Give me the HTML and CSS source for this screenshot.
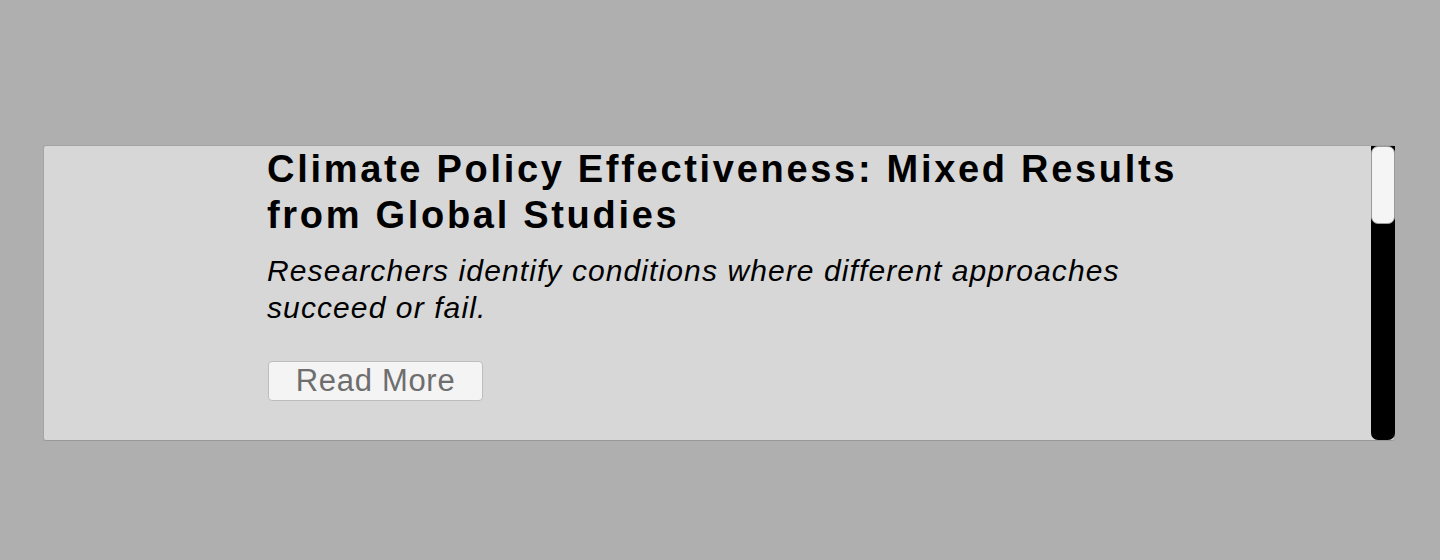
FILE: index.html
```html
<!DOCTYPE html>
<html lang="en">
<head>
<meta charset="utf-8">
<title>Climate Policy Effectiveness</title>
<link rel="stylesheet" href="styles.css">
</head>
<body>
<div class="stage">
  <section class="feed">
    <div class="feed-body">
      <article class="story">
        <h2 class="story-title">Climate Policy Effectiveness: Mixed Results from Global Studies</h2>
        <p class="story-dek">Researchers identify conditions where different approaches succeed or fail.</p>
        <button class="story-btn" type="button">Read More</button>
      </article>
    </div>
    <div class="scrollbar" aria-hidden="true">
      <div class="scrollbar-thumb"></div>
    </div>
  </section>
</div>
</body>
</html>
```
FILE: styles.css
```css
html, body {
  margin: 0;
  padding: 0;
  background: #afafaf;
}
.stage {
  padding: 145px 45px 0 43px;
}
.feed {
  box-sizing: border-box;
  display: flex;
  height: 296px;
  background: #d7d7d7;
  border: 1px solid #a3a3a3;
  border-bottom-color: #989898;
  border-radius: 3px;
  font-family: "Liberation Sans", Arial, sans-serif;
  color: #000;
}
.feed-body {
  flex: 1;
  overflow: hidden;
}
.scrollbar {
  width: 24px;
  background: #000;
  border-radius: 0 0 7px 7px;
  margin-right: -1px;
}
.scrollbar-thumb {
  box-sizing: border-box;
  height: 78px;
  background: #f5f5f5;
  border: 1px solid #9a9a9a;
  border-radius: 7px;
}
.story {
  padding: 0 0 0 223px;
  max-width: 960px;
}
.story-title {
  margin: 0;
  font-size: 38px;
  line-height: 46px;
  font-weight: bold;
  letter-spacing: 2.7px;
}
.story-dek {
  margin: 14px 0 0;
  font-size: 30px;
  line-height: 37px;
  font-style: italic;
  letter-spacing: 1.1px;
}
.story-btn {
  display: block;
  margin-top: 35px;
  margin-left: 1px;
  width: 215px;
  height: 40px;
  padding: 0;
  background: #f4f4f4;
  border: 1px solid #bdbdbd;
  border-radius: 4px;
  font-family: "Liberation Sans", Arial, sans-serif;
  font-size: 31px;
  letter-spacing: 0.7px;
  color: #6e6e6e;
}
```
